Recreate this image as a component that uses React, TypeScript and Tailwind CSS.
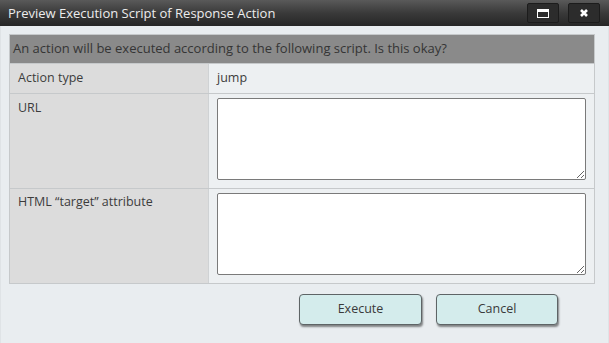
import React from "react";

export default function App() {
  const font = { fontFamily: '"Open Sans", "Noto Sans", sans-serif' };
  return (
    <div className="w-[609px] h-[343px] bg-[#e9edf0] flex flex-col overflow-hidden" style={font}>
      <div className="h-[26px] shrink-0 bg-gradient-to-b from-[#5a5a5a] via-[#3a3a3a] to-[#262626] flex items-center pl-[8px] pr-[9px]">
        <div className="flex-1 text-[13px] text-[#ececec] leading-none">Preview Execution Script of Response Action</div>
        <div className="flex gap-[9px]">
          <div className="w-[32px] h-[20px] bg-[#2c2c2c] border border-[#1c1c1c] rounded-[2px] flex items-center justify-center">
            <div className="w-[12px] h-[9px] border-[1.5px] border-t-[3px] border-white" />
          </div>
          <div className="w-[32px] h-[20px] bg-[#2c2c2c] border border-[#1c1c1c] rounded-[2px] flex items-center justify-center">
            <svg width="10" height="10" viewBox="0 0 10 10">
              <path d="M2 2 L8 8 M8 2 L2 8" stroke="#ffffff" strokeWidth="2.6" strokeLinecap="butt" />
            </svg>
          </div>
        </div>
      </div>
      <div className="flex-1 pt-[8px] pl-[8px] pr-[15px] border-l border-r border-[#dfe3e6]">
        <div className="w-[586px] border border-[#c6c9cb] text-[12.5px] text-[#3c3c3c]">
          <div className="h-[29px] bg-[#8a8a8a] flex items-center pl-[3px] text-[13px] text-[#353535] border-b border-[#c6c9cb]">
            An action will be executed according to the following script. Is this okay?
          </div>
          <div className="flex h-[30px] border-b border-[#c6c9cb]">
            <div className="w-[199px] bg-[#dcdcdc] border-r border-[#cfd2d4] flex items-center pl-[8px]">Action type</div>
            <div className="flex-1 bg-[#edf0f2] flex items-center pl-[8px]">jump</div>
          </div>
          <div className="flex h-[95px] border-b border-[#c6c9cb]">
            <div className="w-[199px] bg-[#dcdcdc] border-r border-[#cfd2d4] pl-[8px] pt-[5px]">URL</div>
            <div className="flex-1 bg-[#edf0f2] pl-[8px] pt-[4px]">
              <textarea className="w-[369px] h-[82px] bg-white border border-[#7a7a7a] rounded-[2px] block" />
            </div>
          </div>
          <div className="flex h-[94px]">
            <div className="w-[199px] bg-[#dcdcdc] border-r border-[#cfd2d4] pl-[8px] pt-[4px]">HTML “target” attribute</div>
            <div className="flex-1 bg-[#edf0f2] pl-[8px] pt-[4px]">
              <textarea className="w-[369px] h-[82px] bg-white border border-[#7a7a7a] rounded-[2px] block" />
            </div>
          </div>
        </div>
        <div className="flex justify-end gap-[14px] pr-[35px] mt-[10px]">
          <button className="w-[123px] h-[31px] bg-[#d4ecec] border border-[#5e6466] rounded-[4px] shadow-[1px_2px_2px_rgba(0,0,0,0.45)] text-[12.5px] text-[#3a3a3a]">Execute</button>
          <button className="w-[122px] h-[31px] bg-[#d4ecec] border border-[#5e6466] rounded-[4px] shadow-[1px_2px_2px_rgba(0,0,0,0.45)] text-[12.5px] text-[#3a3a3a]">Cancel</button>
        </div>
      </div>
    </div>
  );
}
